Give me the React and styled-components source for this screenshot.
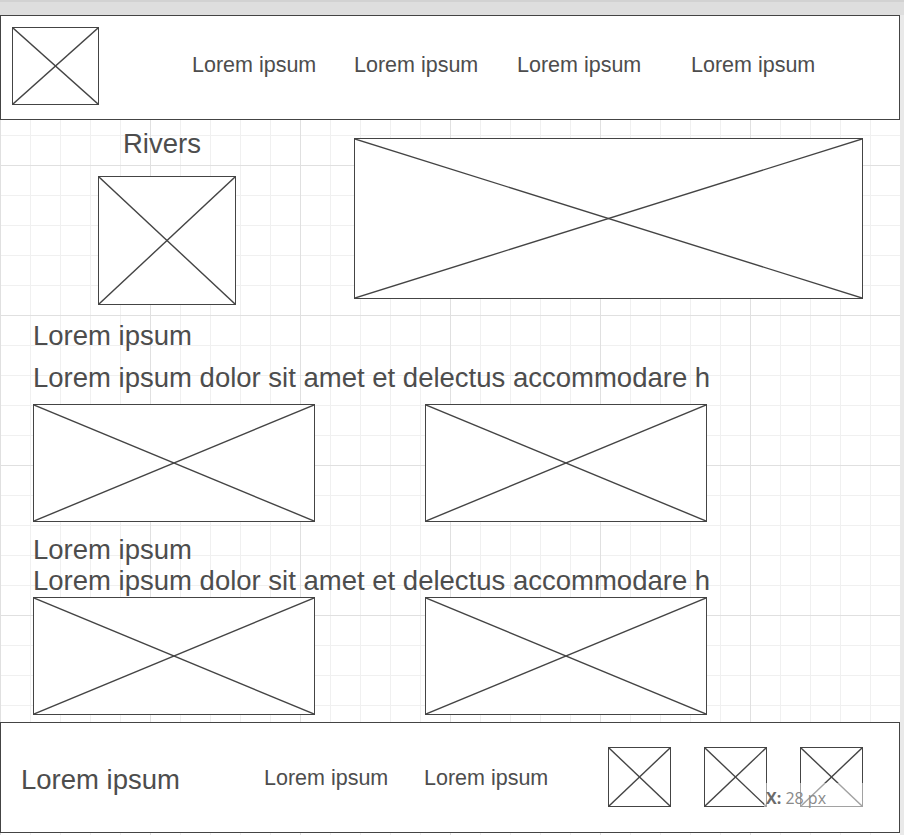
import styled, { createGlobalStyle } from 'styled-components';

const GlobalStyle = createGlobalStyle`
  html, body {
    margin: 0;
    padding: 0;
    background: #e9e9e9;
  }
  * {
    box-sizing: border-box;
  }
`;

const TopStrip = styled.div`
  height: 15px;
  background: #dedede;
  border-top: 2px solid #d2d2d2;
`;

const Canvas = styled.div`
  width: 900px;
  height: 820px;
  background-color: #fff;
  background-image:
    linear-gradient(to right, #e0e0e0 1px, transparent 1px),
    linear-gradient(to bottom, #e0e0e0 1px, transparent 1px),
    linear-gradient(to right, #f0f0f0 1px, transparent 1px),
    linear-gradient(to bottom, #f0f0f0 1px, transparent 1px);
  background-size: 150px 150px, 150px 150px, 30px 30px, 30px 30px;
  font-family: "Liberation Sans", Arial, sans-serif;
  color: #4d4d4d;
  display: flex;
  flex-direction: column;
`;

const Header = styled.header`
  height: 105px;
  border: 1px solid #444;
  background: #fff;
  display: flex;
  align-items: flex-start;
  padding: 11px;
`;

const Nav = styled.nav`
  display: flex;
  margin-top: 26px;
  padding-left: 93px;
`;

const NavLink = styled.a`
  width: ${(p) => p.$w}px;
  font-size: 21.5px;
  line-height: 24px;
  white-space: nowrap;
`;

const Frame = styled.div`
  width: ${(p) => p.$w}px;
  height: ${(p) => p.$h}px;
  border: 1px solid #444;
  background: #fff;
  flex: none;

  svg {
    display: block;
    width: 100%;
    height: 100%;
  }
`;

function Placeholder({ w, h, className }) {
  return (
    <Frame $w={w} $h={h} className={className}>
      <svg viewBox="0 0 100 100" preserveAspectRatio="none">
        <line x1="0" y1="0" x2="100" y2="100" stroke="#444" strokeWidth="1.4" vectorEffect="non-scaling-stroke" />
        <line x1="100" y1="0" x2="0" y2="100" stroke="#444" strokeWidth="1.4" vectorEffect="non-scaling-stroke" />
      </svg>
    </Frame>
  );
}

const Main = styled.main`
  flex: 1;
  display: flex;
  flex-direction: column;
`;

const Intro = styled.section`
  display: flex;
  align-items: flex-start;
  padding-top: 9px;
`;

const RiversColumn = styled.div`
  margin-left: 98px;
  display: flex;
  flex-direction: column;
`;

const Title = styled.h1`
  margin: 0 0 17px;
  padding-left: 25px;
  font-size: 27.5px;
  line-height: 30px;
  font-weight: normal;
`;

const Banner = styled(Placeholder)`
  margin-left: 118px;
  margin-top: 9px;
`;

const Section = styled.section`
  padding-left: 33px;
  margin-top: ${(p) => p.$top}px;
  display: flex;
  flex-direction: column;
`;

const SectionTitle = styled.h2`
  margin: 0;
  font-size: 27.5px;
  line-height: 30px;
  font-weight: normal;
`;

const SectionText = styled.p`
  margin: ${(p) => p.$gap}px 0 ${(p) => p.$after}px;
  font-size: 27.5px;
  line-height: 30px;
  white-space: nowrap;
`;

const ImageRow = styled.div`
  display: flex;
  gap: 110px;
`;

const Footer = styled.footer`
  position: relative;
  margin-top: 6px;
  margin-bottom: 2px;
  height: 111px;
  border: 1px solid #444;
  background: #fff;
  display: flex;
  align-items: flex-start;
  padding: 24px 0 0 20px;
`;

const FooterTitle = styled.div`
  width: 243px;
  margin-top: 18px;
  font-size: 27.5px;
  line-height: 30px;
`;

const FooterLink = styled.a`
  width: ${(p) => p.$w}px;
  margin-top: 19px;
  font-size: 21.5px;
  line-height: 24px;
  white-space: nowrap;
`;

const Socials = styled.div`
  display: flex;
  gap: 33px;
`;

const Measure = styled.div`
  position: absolute;
  left: 763px;
  top: 60px;
  width: 110px;
  height: 34px;
  padding: 5px 0 0 2px;
  background: rgba(255, 255, 255, 0.5);
  font-family: "Open Sans", "Liberation Sans", sans-serif;
  font-size: 16px;
  line-height: 20px;
  color: #8a8a8a;

  b {
    color: #6a6a6a;
  }
`;

const sections = [
  { top: 16, gap: 12, after: 11 },
  { top: 13, gap: 1, after: 1 },
];

export default function App() {
  return (
    <>
      <GlobalStyle />
      <TopStrip />
      <Canvas>
        <Header>
          <Placeholder w={87} h={78} />
          <Nav>
            <NavLink $w={162}>Lorem ipsum</NavLink>
            <NavLink $w={163}>Lorem ipsum</NavLink>
            <NavLink $w={174}>Lorem ipsum</NavLink>
            <NavLink $w={130}>Lorem ipsum</NavLink>
          </Nav>
        </Header>
        <Main>
          <Intro>
            <RiversColumn>
              <Title>Rivers</Title>
              <Placeholder w={138} h={129} />
            </RiversColumn>
            <Banner w={509} h={161} />
          </Intro>
          {sections.map((s, i) => (
            <Section key={i} $top={s.top}>
              <SectionTitle>Lorem ipsum</SectionTitle>
              <SectionText $gap={s.gap} $after={s.after}>
                Lorem ipsum dolor sit amet et delectus accommodare h
              </SectionText>
              <ImageRow>
                <Placeholder w={282} h={118} />
                <Placeholder w={282} h={118} />
              </ImageRow>
            </Section>
          ))}
        </Main>
        <Footer>
          <FooterTitle>Lorem ipsum</FooterTitle>
          <FooterLink $w={160}>Lorem ipsum</FooterLink>
          <FooterLink $w={184}>Lorem ipsum</FooterLink>
          <Socials>
            <Placeholder w={63} h={60} />
            <Placeholder w={63} h={60} />
            <Placeholder w={63} h={60} />
          </Socials>
          <Measure>
            <b>X:</b> 28 px
          </Measure>
        </Footer>
      </Canvas>
    </>
  );
}
